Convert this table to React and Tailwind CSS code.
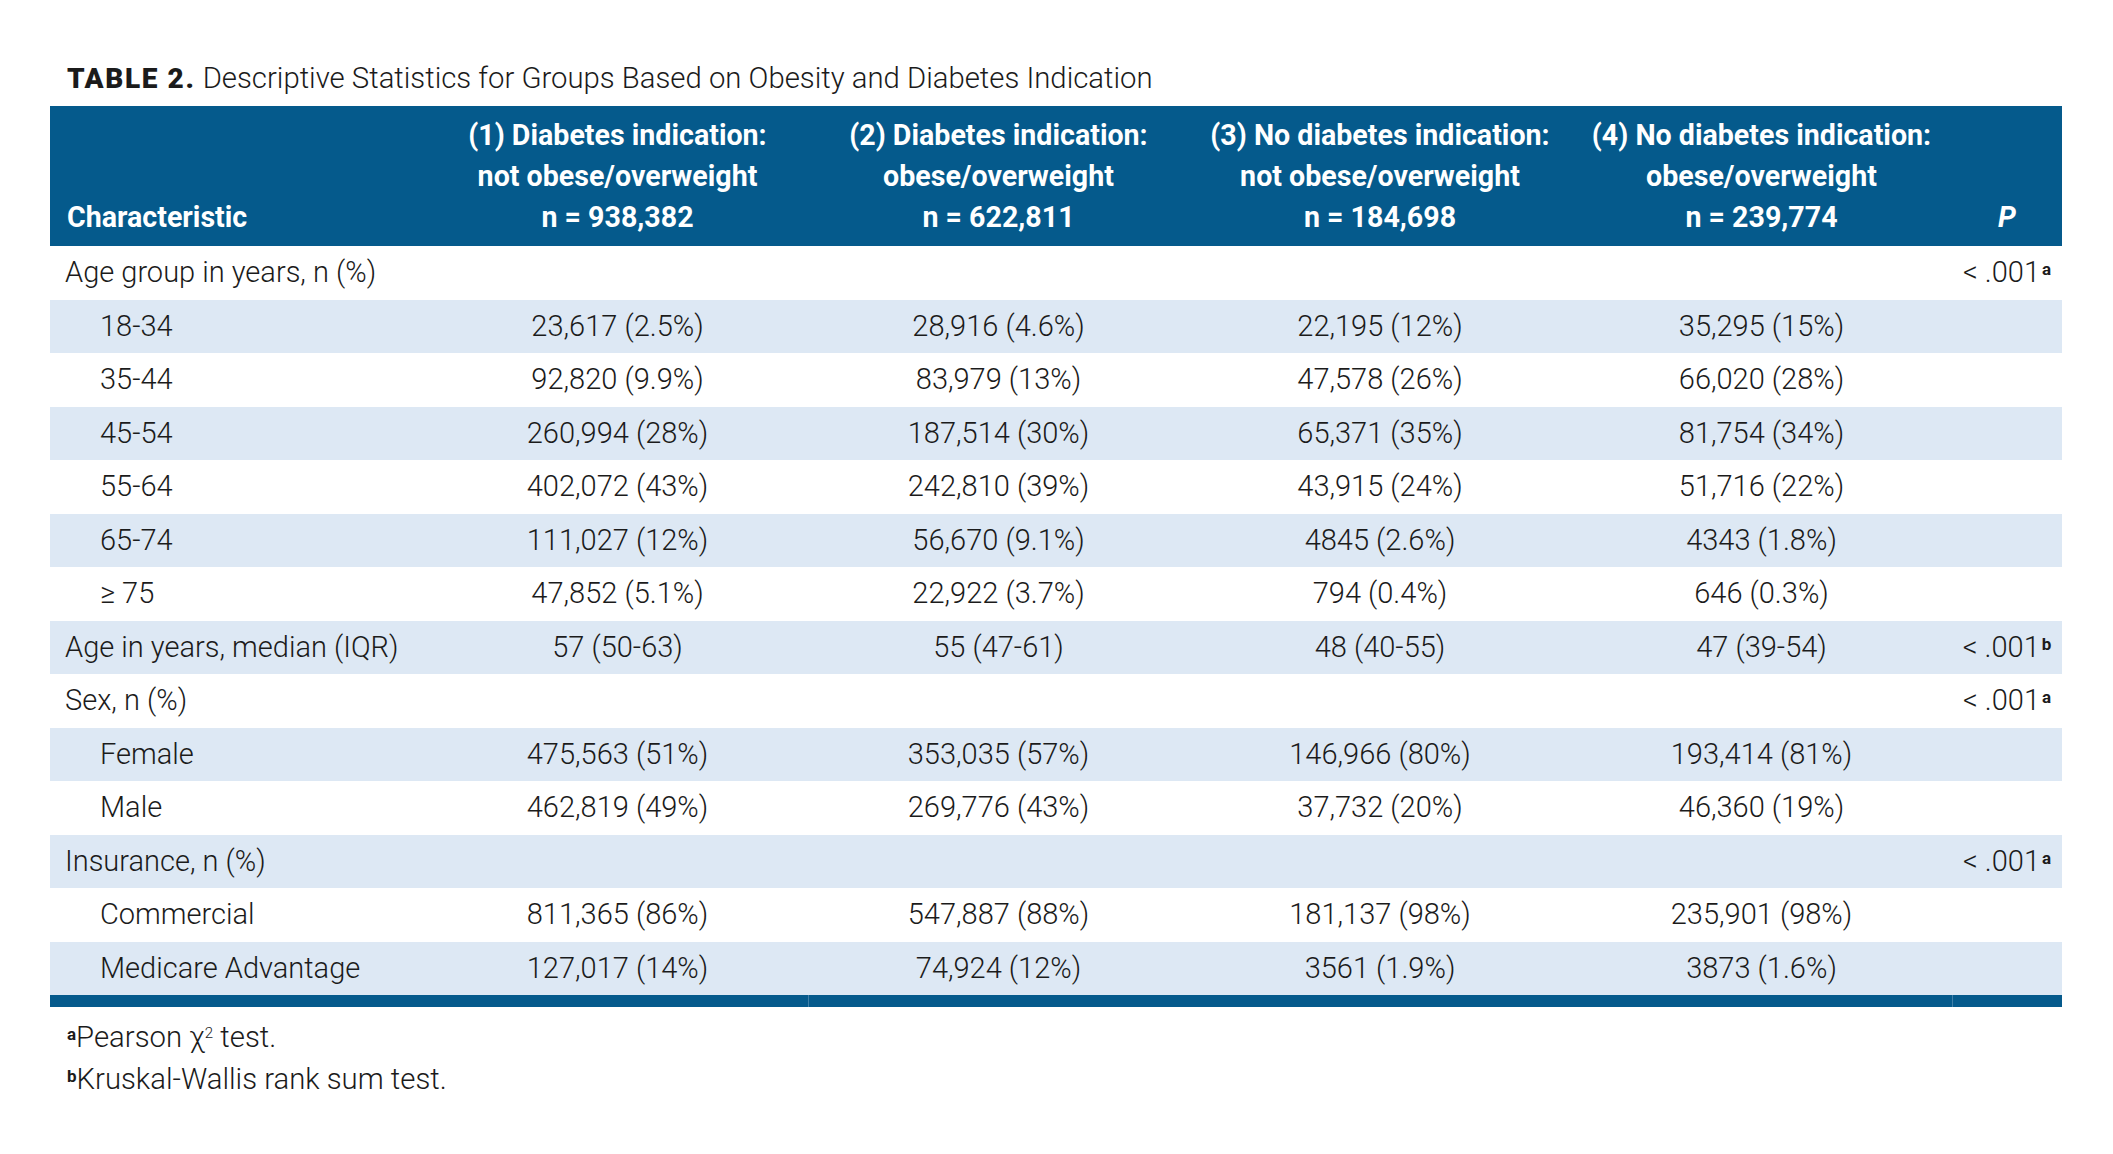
import React from "react";

const rows = [
  { label: "Age group in years, n (%)", sub: false, vals: ["", "", "", ""], p: "a" },
  { label: "18-34", sub: true, vals: ["23,617 (2.5%)", "28,916 (4.6%)", "22,195 (12%)", "35,295 (15%)"] },
  { label: "35-44", sub: true, vals: ["92,820 (9.9%)", "83,979 (13%)", "47,578 (26%)", "66,020 (28%)"] },
  { label: "45-54", sub: true, vals: ["260,994 (28%)", "187,514 (30%)", "65,371 (35%)", "81,754 (34%)"] },
  { label: "55-64", sub: true, vals: ["402,072 (43%)", "242,810 (39%)", "43,915 (24%)", "51,716 (22%)"] },
  { label: "65-74", sub: true, vals: ["111,027 (12%)", "56,670 (9.1%)", "4845 (2.6%)", "4343 (1.8%)"] },
  { label: "≥ 75", sub: true, vals: ["47,852 (5.1%)", "22,922 (3.7%)", "794 (0.4%)", "646 (0.3%)"] },
  { label: "Age in years, median (IQR)", sub: false, vals: ["57 (50-63)", "55 (47-61)", "48 (40-55)", "47 (39-54)"], p: "b" },
  { label: "Sex, n (%)", sub: false, vals: ["", "", "", ""], p: "a" },
  { label: "Female", sub: true, vals: ["475,563 (51%)", "353,035 (57%)", "146,966 (80%)", "193,414 (81%)"] },
  { label: "Male", sub: true, vals: ["462,819 (49%)", "269,776 (43%)", "37,732 (20%)", "46,360 (19%)"] },
  { label: "Insurance, n (%)", sub: false, vals: ["", "", "", ""], p: "a" },
  { label: "Commercial", sub: true, vals: ["811,365 (86%)", "547,887 (88%)", "181,137 (98%)", "235,901 (98%)"] },
  { label: "Medicare Advantage", sub: true, vals: ["127,017 (14%)", "74,924 (12%)", "3561 (1.9%)", "3873 (1.6%)"] },
];

const heads = [
  ["(1) Diabetes indication:", "not obese/overweight", "n = 938,382"],
  ["(2) Diabetes indication:", "obese/overweight", "n = 622,811"],
  ["(3) No diabetes indication:", "not obese/overweight", "n = 184,698"],
  ["(4) No diabetes indication:", "obese/overweight", "n = 239,774"],
];

const grid = "grid grid-cols-[377px_381px_381px_382px_381px_110px]";

export default function App() {
  return (
    <div
      className="w-[2113px] h-[1154px] bg-white text-[#1b1b1b] pl-[50px] pt-[58px]"
      style={{ fontFamily: "Roboto, 'Liberation Sans', sans-serif" }}
    >
      <div className="w-[2012px]">
        <div className="leading-[40px] text-[29.3px] font-light pl-[17px] mb-[7px] whitespace-nowrap">
          <span className="font-black text-[28px] tracking-[1.6px]">TABLE 2.</span>{" "}
          <span>Descriptive Statistics for Groups Based on Obesity and Diabetes Indication</span>
        </div>

        <div className={`${grid} bg-[#055a8c] text-white font-bold text-[28.6px] leading-[41px] h-[140px] pt-[9px] pb-[8px] items-end`}>
          <div className="pl-[17px]">Characteristic</div>
          {heads.map((h, i) => (
            <div key={i} className="text-center whitespace-nowrap">
              <div>{h[0]}</div>
              <div>{h[1]}</div>
              <div>{h[2]}</div>
            </div>
          ))}
          <div className="text-center italic">P</div>
        </div>

        {rows.map((r, i) => (
          <div
            key={i}
            className={`${grid} h-[53.5px] items-center text-[29px] font-light ${i % 2 === 1 ? "bg-[#dde8f4]" : "bg-white"}`}
          >
            <div className={r.sub ? "pl-[50px]" : "pl-[15px]"}>{r.label}</div>
            {r.vals.map((v, j) => (
              <div key={j} className="text-center whitespace-nowrap">{v}</div>
            ))}
            <div className="text-center whitespace-nowrap">
              {r.p ? (
                <span>
                  &lt; .001<span className="text-[17px] leading-none font-bold align-[7px] ml-[2px]">{r.p}</span>
                </span>
              ) : null}
            </div>
          </div>
        ))}

        <div className="flex h-[12px] bg-[#055a8c]">
          <div className="w-[758px]" />
          <div className="w-[1144px] border-l border-[#3f7fa8]" />
          <div className="flex-1 border-l border-[#3f7fa8]" />
        </div>

        <div className="mt-[9px] text-[29.3px] font-light leading-[42px] pl-[17px]">
          <div className="h-[42px]">
            <span className="text-[17px] leading-none font-bold align-[7px]">a</span>Pearson χ<span className="text-[15px] leading-none align-[9px]">2</span> test.
          </div>
          <div className="h-[42px]">
            <span className="text-[17px] leading-none font-bold align-[7px]">b</span>Kruskal-Wallis rank sum test.
          </div>
        </div>
      </div>
    </div>
  );
}
